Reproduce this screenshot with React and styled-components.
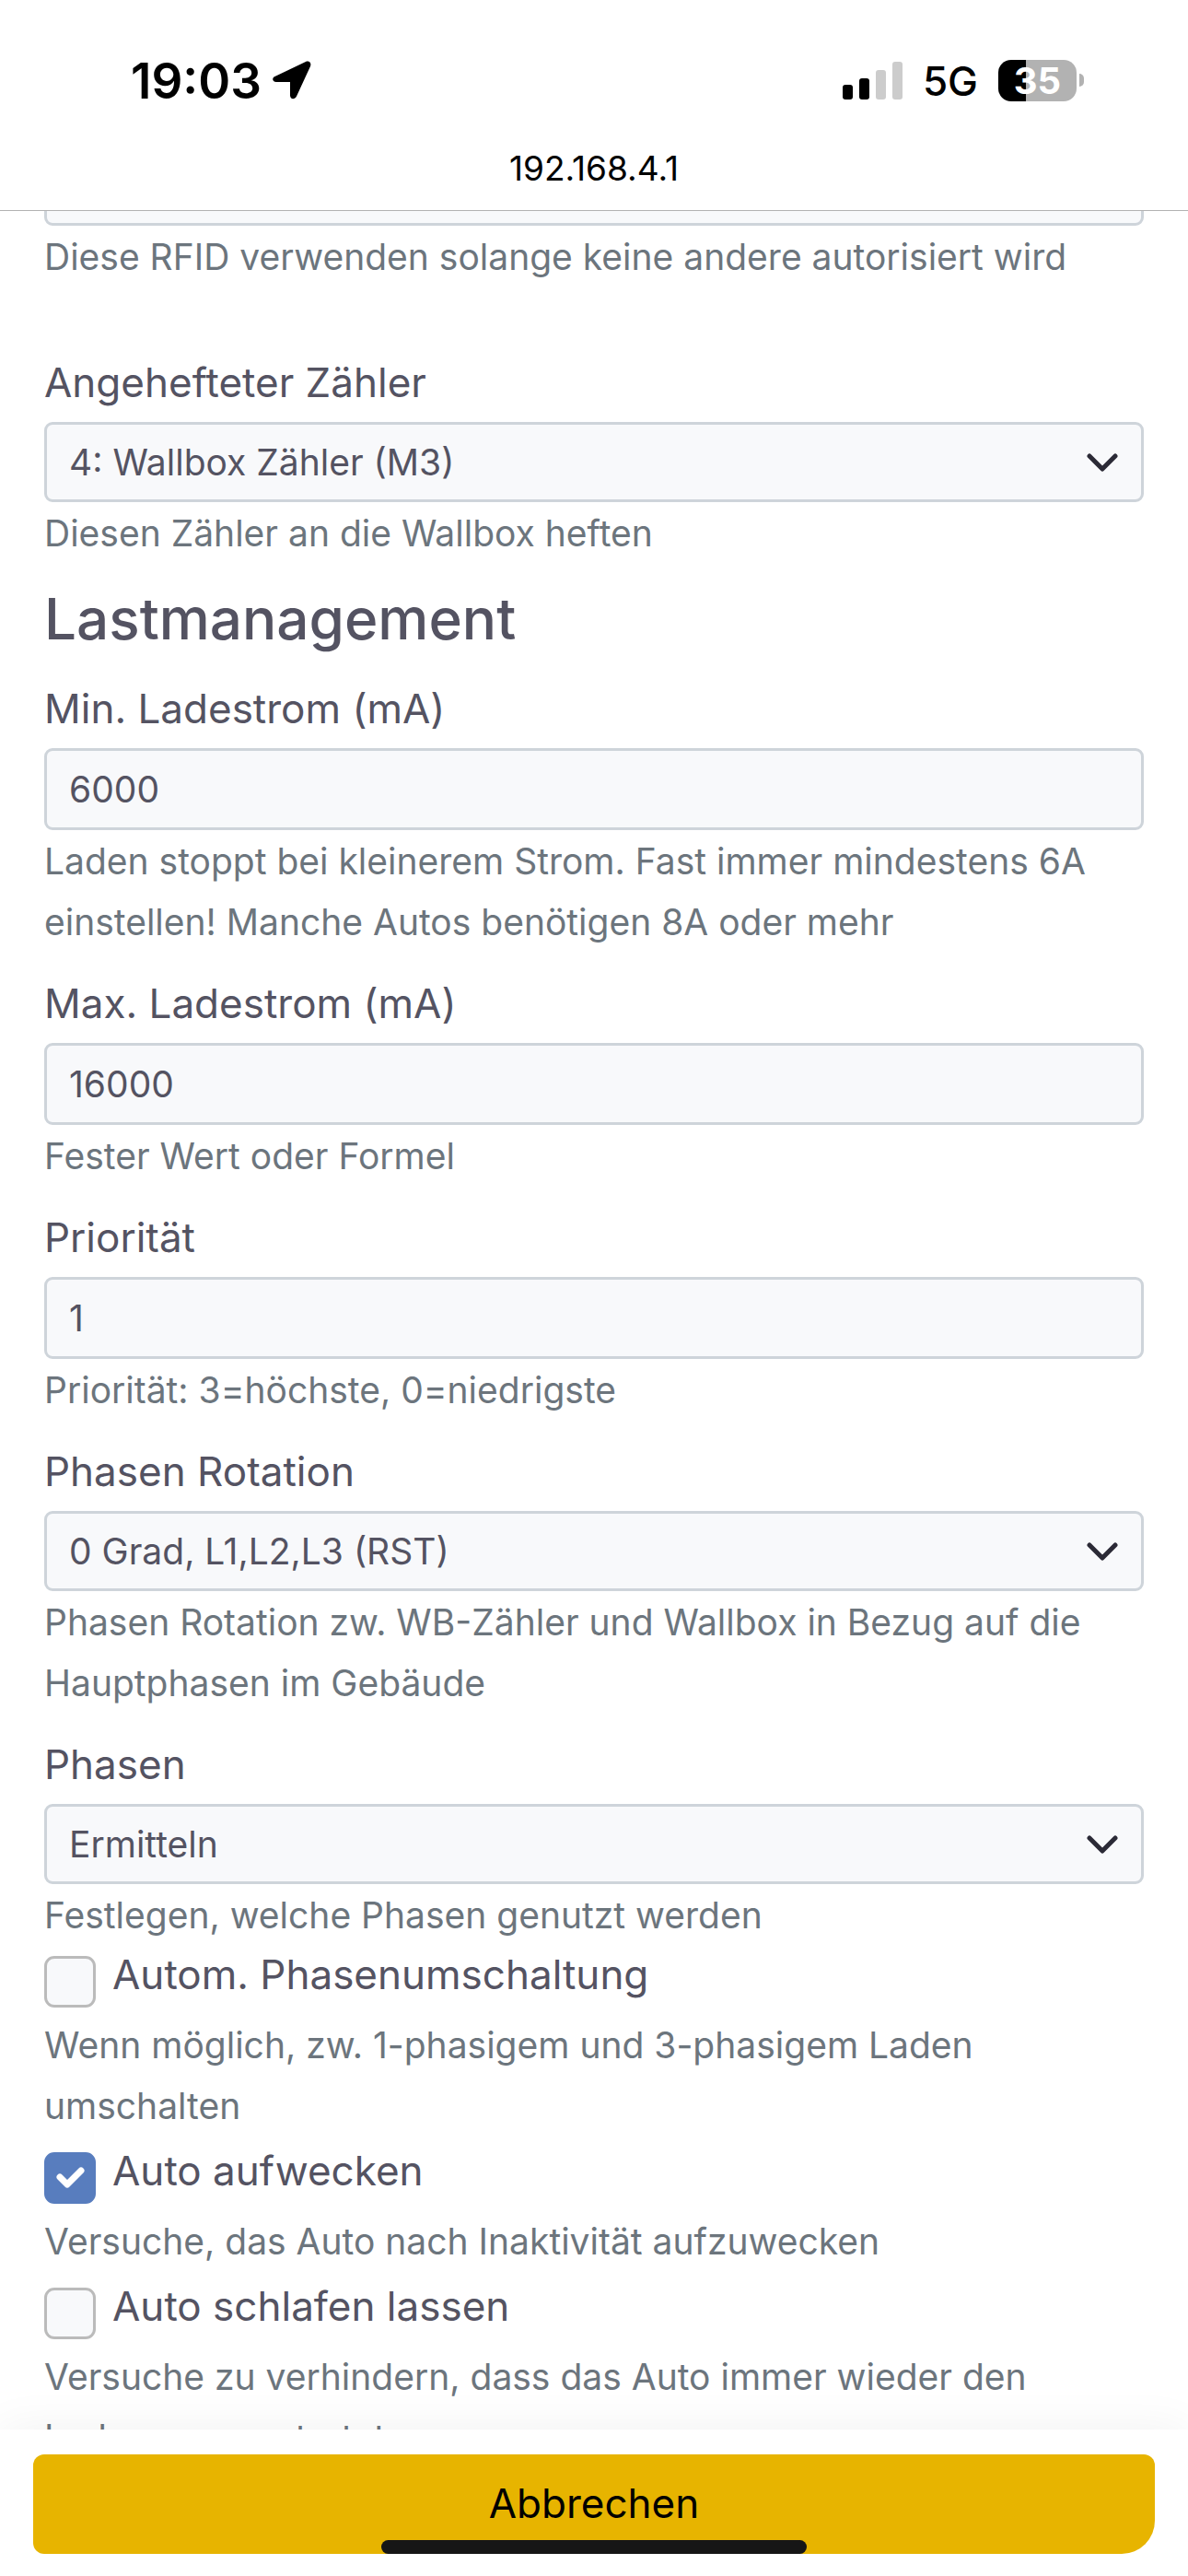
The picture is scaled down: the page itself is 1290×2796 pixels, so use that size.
import React from "react";
import styled, { createGlobalStyle } from "styled-components";

const GlobalStyle = createGlobalStyle`
  *, *::before, *::after { box-sizing: border-box; }
  body {
    margin: 0;
    background: #ffffff;
    color: #545362;
    font-family: Inter, "Liberation Sans", sans-serif;
    font-size: 44px;
  }
`;

const Screen = styled.div`
  display: flex;
  flex-direction: column;
  height: 100vh;
  background: #ffffff;
`;

const Header = styled.header`
  flex: none;
  display: flex;
  flex-direction: column;
  color: #000000;
  border-bottom: 1px solid #b2b2b2;
`;

const StatusBar = styled.div`
  display: flex;
  align-items: center;
  justify-content: space-between;
  height: 150px;
  padding: 24px 113px 0 142px;
`;

const StatusGroup = styled.div`
  display: flex;
  align-items: center;
  gap: ${(p) => p.$gap}px;
`;

const Clock = styled.time`
  padding-top: 2px;
  font-size: 53px;
  font-weight: 600;
  line-height: 64px;
`;

const Network = styled.span`
  padding-top: 2px;
  font-size: 44px;
  font-weight: 500;
  line-height: 64px;
`;

const Battery = styled.div`
  display: flex;
  align-items: center;
  gap: 3px;
`;

const BatteryBody = styled.div`
  width: 85px;
  height: 45px;
  border-radius: 14px;
  background: linear-gradient(to right, #000000 35%, #b2b2b2 35%);
  color: #ffffff;
  font-size: 40px;
  font-weight: 700;
  line-height: 45px;
  text-align: center;
`;

const BatteryTip = styled.div`
  width: 5px;
  height: 14px;
  border-radius: 0 5px 5px 0;
  background: #b2b2b2;
`;

const Address = styled.div`
  height: 78px;
  font-size: 37px;
  line-height: 66px;
  text-align: center;
`;

const Content = styled.main`
  flex: 1;
  min-height: 0;
  overflow: hidden;
`;

/* The form is scrolled so that the first input is partly under the header. */
const Form = styled.form`
  display: flex;
  flex-direction: column;
  margin-top: -73px;
  padding: 0 48px;
`;

const Field = styled.div`
  display: flex;
  flex-direction: column;
  padding-top: ${(p) => p.$space}px;
`;

const Label = styled.label`
  font-size: 44px;
  line-height: 74px;
  margin-bottom: 6px;
`;

const controlBox = `
  display: block;
  width: 100%;
  margin: 0;
  border: 3px solid #ced4da;
  border-radius: 9px;
  background: #f8f9fb;
  color: #545362;
  font-family: inherit;
  font-size: 39px;
  line-height: 60px;
  outline: none;
`;

const Input = styled.input`
  ${controlBox}
  height: 89px;
  padding: 0 24px;
`;

const SelectWrap = styled.div`
  display: grid;
  align-items: center;

  > * { grid-area: 1 / 1; }
  > svg { justify-self: end; margin-right: 28px; pointer-events: none; }
`;

const Select = styled.select`
  ${controlBox}
  height: 87px;
  padding: 0 80px 0 24px;
  appearance: none;
`;

const Help = styled.small`
  margin-top: 1px;
  color: #6c757d;
  font-size: 39px;
  line-height: 66px;
`;

const SectionTitle = styled.h2`
  margin: 22px 0 4px;
  font-size: 62px;
  font-weight: 500;
  line-height: 76px;
`;

const CheckField = styled.div`
  display: flex;
  flex-direction: column;
  margin-bottom: 6px;
`;

const CheckRow = styled.div`
  display: flex;
  align-items: flex-start;
  gap: 18px;
  height: 74px;
`;

const CheckLabel = styled.label`
  font-size: 44px;
  line-height: 62px;
`;

const CheckBoxWrap = styled.span`
  display: grid;
  padding-top: 11px;

  > * { grid-area: 1 / 1; }
  > svg { pointer-events: none; }
`;

const CheckBox = styled.input`
  appearance: none;
  width: 56px;
  height: 56px;
  margin: 0;
  border: 3px solid #bbbbbb;
  border-radius: 11px;
  background: #f8f9fb;

  &:checked { border-color: #587dbe; background: #587dbe; }
`;

const Footer = styled.footer`
  flex: none;
  position: relative;
  z-index: 1;
  padding: 27px 36px 24px;
  background: #ffffff;
  box-shadow: 0 0 48px rgba(0, 0, 0, 0.06);
`;

const CancelButton = styled.button`
  display: block;
  width: 100%;
  height: 108px;
  padding: 0 0 2px;
  border: 0;
  border-radius: 12px 12px 36px 12px;
  background: #e7b400;
  color: #000000;
  font-family: inherit;
  font-size: 44px;
  line-height: 66px;
`;

const HomeIndicator = styled.div`
  position: absolute;
  left: 50%;
  bottom: 24px;
  width: 462px;
  height: 15px;
  margin-left: -231px;
  border-radius: 8px;
  background: #161616;
`;

function LocationIcon() {
  return (
    <svg width="42" height="42" viewBox="0 0 42 42" aria-hidden="true">
      <path
        d="M2.5 17 36 1C39.500-.5 42.500 2 41 6L26 38.500C24 42.500 19 42 19 37.500V23H4C-.5 23-1 18.500 2.500 17Z"
        fill="#000"
      />
    </svg>
  );
}

function SignalIcon() {
  return (
    <svg width="65" height="41" viewBox="0 0 65 41" aria-hidden="true">
      <rect x="0" y="25" width="11" height="16" rx="3" fill="#000" />
      <rect x="18" y="18" width="11" height="23" rx="3" fill="#000" />
      <rect x="36" y="9" width="11" height="32" rx="3" fill="#ccc" />
      <rect x="54" y="0" width="11" height="41" rx="3" fill="#ccc" />
    </svg>
  );
}

function Chevron() {
  return (
    <svg width="34" height="20" viewBox="0 0 34 20" aria-hidden="true">
      <path d="M3 3 17 17 31 3" fill="none" stroke="#2b2a36" strokeWidth="5" strokeLinecap="round" strokeLinejoin="round" />
    </svg>
  );
}

function CheckMark() {
  return (
    <svg width="56" height="56" viewBox="0 0 56 56" aria-hidden="true">
      <path d="M17 27 25 35 40 20" fill="none" stroke="#fff" strokeWidth="7" strokeLinecap="round" strokeLinejoin="round" />
    </svg>
  );
}

function SelectField({ id, label, value, help, space = 18 }) {
  return (
    <Field $space={space}>
      <Label htmlFor={id}>{label}</Label>
      <SelectWrap>
        <Select id={id} defaultValue={value}>
          <option>{value}</option>
        </Select>
        <Chevron />
      </SelectWrap>
      <Help>{help}</Help>
    </Field>
  );
}

function InputField({ id, label, value, help, space = 18 }) {
  return (
    <Field $space={space}>
      <Label htmlFor={id}>{label}</Label>
      <Input id={id} type="text" defaultValue={value} />
      <Help>{help}</Help>
    </Field>
  );
}

function ToggleField({ id, label, help, checked = false }) {
  const [on, setOn] = React.useState(checked);
  return (
    <CheckField>
      <CheckRow>
        <CheckBoxWrap>
          <CheckBox id={id} type="checkbox" checked={on} onChange={(e) => setOn(e.target.checked)} />
          {on && <CheckMark />}
        </CheckBoxWrap>
        <CheckLabel htmlFor={id}>{label}</CheckLabel>
      </CheckRow>
      <Help>{help}</Help>
    </CheckField>
  );
}

export default function App() {
  return (
    <Screen>
      <GlobalStyle />
      <Header>
        <StatusBar>
          <StatusGroup $gap={12}>
            <Clock>19:03</Clock>
            <LocationIcon />
          </StatusGroup>
          <StatusGroup $gap={22}>
            <SignalIcon />
            <Network>5G</Network>
            <Battery>
              <BatteryBody>35</BatteryBody>
              <BatteryTip />
            </Battery>
          </StatusGroup>
        </StatusBar>
        <Address>192.168.4.1</Address>
      </Header>
      <Content>
        <Form>
          <Field $space={0}>
            <Input type="text" aria-label="RFID" />
            <Help>Diese RFID verwenden solange keine andere autorisiert wird</Help>
          </Field>
          <SelectField
            id="meter"
            label="Angehefteter Zähler"
            value="4: Wallbox Zähler (M3)"
            help="Diesen Zähler an die Wallbox heften"
            space={66}
          />
          <SectionTitle>Lastmanagement</SectionTitle>
          <InputField
            id="min-current"
            label="Min. Ladestrom (mA)"
            value="6000"
            help="Laden stoppt bei kleinerem Strom. Fast immer mindestens 6A einstellen! Manche Autos benötigen 8A oder mehr"
          />
          <InputField id="max-current" label="Max. Ladestrom (mA)" value="16000" help="Fester Wert oder Formel" />
          <InputField id="priority" label="Priorität" value="1" help="Priorität: 3=höchste, 0=niedrigste" />
          <SelectField
            id="rotation"
            label="Phasen Rotation"
            value="0 Grad, L1,L2,L3 (RST)"
            help="Phasen Rotation zw. WB-Zähler und Wallbox in Bezug auf die Hauptphasen im Gebäude"
          />
          <SelectField id="phases" label="Phasen" value="Ermitteln" help="Festlegen, welche Phasen genutzt werden" />
          <ToggleField
            id="auto-phases"
            label="Autom. Phasenumschaltung"
            help="Wenn möglich, zw. 1-phasigem und 3-phasigem Laden umschalten"
          />
          <ToggleField id="wake" label="Auto aufwecken" help="Versuche, das Auto nach Inaktivität aufzuwecken" checked />
          <ToggleField
            id="sleep"
            label="Auto schlafen lassen"
            help="Versuche zu verhindern, dass das Auto immer wieder den Ladevorgang startet"
          />
        </Form>
      </Content>
      <Footer>
        <CancelButton type="button">Abbrechen</CancelButton>
        <HomeIndicator />
      </Footer>
    </Screen>
  );
}
